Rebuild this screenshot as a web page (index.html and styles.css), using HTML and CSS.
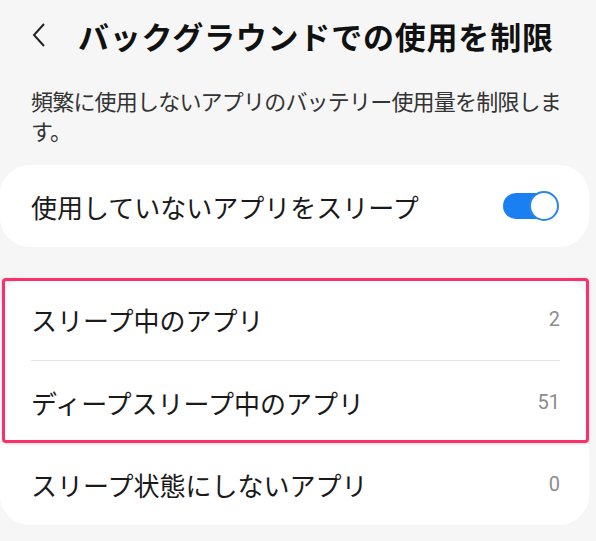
FILE: index.html
```html
<!DOCTYPE html>
<html lang="ja">
<head>
  <meta charset="UTF-8" />
  <meta name="viewport" content="width=device-width, initial-scale=1.0"/>
  <title>バックグラウンドでの使用を制限</title>
  <link rel="stylesheet" href="styles.css">
</head>
<body>

  <header class="top-bar">
    <button class="back-btn" aria-label="戻る">
      <svg width="16" height="26" viewBox="0 0 16 26">
        <polyline points="13,2 3,13 13,24" fill="none" stroke="#222" stroke-width="2" stroke-linejoin="miter"/>
      </svg>
    </button>
    <h1>バックグラウンドでの使用を制限</h1>
  </header>

  <p class="description">頻繁に使用しないアプリのバッテリー使用量を制限します。</p>

  <div class="card">
    <div class="row">
      <span class="row-label">使用していないアプリをスリープ</span>
      <span class="switch on"><span class="knob"></span></span>
    </div>
  </div>

  <div class="card list">
    <div class="highlight">
      <div class="row">
        <span class="row-label">スリープ中のアプリ</span>
        <span class="row-value">2</span>
      </div>
      <div class="divider"></div>
      <div class="row">
        <span class="row-label">ディープスリープ中のアプリ</span>
        <span class="row-value">51</span>
      </div>
    </div>
    <div class="row">
      <span class="row-label">スリープ状態にしないアプリ</span>
      <span class="row-value">0</span>
    </div>
  </div>

</body>
</html>
```

FILE: styles.css
```css
* {
  box-sizing: border-box;
}

body {
  margin: 0;
  padding: 0;
  background: #f6f6f6;
  font-family: 'Noto Sans CJK JP', 'Noto Sans', sans-serif;
  color: #1a1a1a;
  width: 596px;
  height: 541px;
  overflow: hidden;
}

.top-bar {
  display: flex;
  align-items: center;
  height: 70px;
  padding-left: 31px;
}

.back-btn {
  background: none;
  border: none;
  padding: 0;
  width: 47px;
  height: 30px;
  display: flex;
  align-items: center;
}

.top-bar h1 {
  margin: 0;
  font-size: 31px;
  font-weight: 700;
  color: #111;
  letter-spacing: 0.8px;
  white-space: nowrap;
}

.description {
  margin: 15px 0 20px;
  padding: 0 8px 0 31px;
  font-size: 22px;
  line-height: 30px;
  letter-spacing: -0.8px;
  color: #333;
}

.card {
  background: #fff;
  border-radius: 30px;
  width: 589px;
  margin-bottom: 31px;
}

.row {
  display: flex;
  align-items: center;
  justify-content: space-between;
  height: 82px;
  padding: 0 29px 0 31px;
}

.row-label {
  font-size: 26px;
}

.row-value {
  font-size: 20px;
  color: #8c8c8c;
  font-family: Roboto, 'Noto Sans', sans-serif;
}

.divider {
  height: 1px;
  background: #e4e4e4;
  margin: 0 29px 0 31px;
}

.highlight {
  outline: 3px solid #fa2f6c;
  outline-offset: -3px;
  border-radius: 4px;
  margin-left: 2px;
  box-shadow: 0 1px 3px rgba(0, 0, 0, 0.15);
}

.highlight .row {
  padding-left: 29px;
}

.highlight .divider {
  margin-left: 29px;
}

.switch {
  position: relative;
  width: 54px;
  height: 26px;
  border-radius: 13px;
  background: #1a7ff0;
  margin-right: 3px;
}

.switch .knob {
  position: absolute;
  right: -2px;
  top: -2px;
  width: 30px;
  height: 30px;
  border-radius: 50%;
  background: #fff;
  border: 2px solid #2a85e8;
}
```
